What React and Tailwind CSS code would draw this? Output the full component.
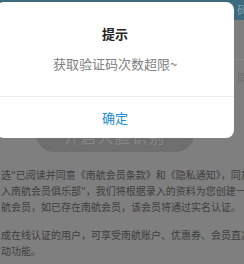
export default function App() {
  const font = { fontFamily: '"Noto Sans CJK SC", "Noto Sans", sans-serif' };
  return (
    <div className="relative w-[244px] h-[264px] overflow-hidden bg-[#7f7f7f]" style={font}>
      {/* background page */}
      <div className="flex flex-col">
        <div className="h-[20px] bg-[#3d6b7d] flex items-center justify-end overflow-hidden">
          <span className="text-[12px] leading-none text-[#7d9dab] mr-[-5px]">码</span>
        </div>
        <div className="h-[40px] border-b border-[#878787]"></div>
        <div className="h-[36px] flex items-center justify-end overflow-hidden">
          <span className="text-[12px] leading-none text-[#6c6c6c] mr-[-5px]">同</span>
        </div>
        <div className="mt-[20px] ml-[36px] w-[158px] h-[36px] rounded-full bg-[#6f6f6f] flex items-center justify-center overflow-hidden">
          <span className="text-[15px] leading-none tracking-[2px] text-[#878787] mt-[4px]">开启人脸识别</span>
        </div>
        <div className="mt-[15px] text-[10px] leading-[16px] text-[#3e3e3e] whitespace-nowrap pl-[1px]">
          <p>选"已阅读并同意《南航会员条款》和《隐私通知》，同意</p>
          <p>入南航会员俱乐部"，我们将根据录入的资料为您创建一个</p>
          <p>航会员，如已存在南航会员，该会员将通过实名认证。</p>
          <p className="mt-[12px]">成在线认证的用户，可享受南航账户、优惠券、会员直减</p>
          <p>动功能。</p>
        </div>
      </div>

      {/* dialog */}
      <div className="absolute left-[-4px] top-[2px] w-[238px] h-[136px] bg-white rounded-lg flex flex-col">
        <div className="pt-[23px] text-center text-[13px] leading-[18px] font-bold text-[#222]">提示</div>
        <div className="mt-[12px] text-center text-[13px] leading-[18px] text-[#808080]">获取验证码次数超限~</div>
        <div className="mt-[23px] border-t border-[#ececec]"></div>
        <div className="flex-1 flex items-center justify-center text-[13px] text-[#1a8ad6]">确定</div>
      </div>
    </div>
  );
}
